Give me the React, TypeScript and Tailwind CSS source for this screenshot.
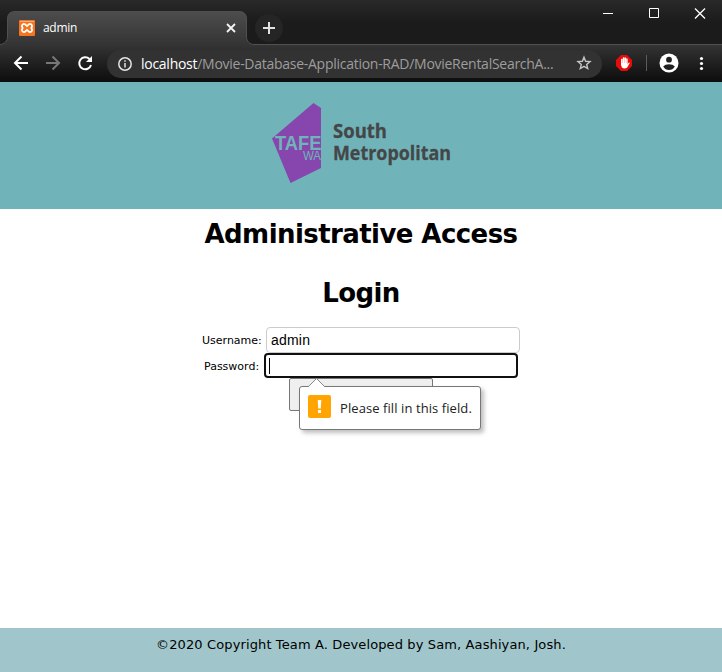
import React from "react";

function BrowserTabs() {
  return (
    <div className="relative flex h-[45px] items-start bg-linear-to-b from-[#292929] via-[#1b1b1b] to-[#1b1b1b] pl-[7px]">
      <svg className="absolute left-0 top-0" width="722" height="45" fill="none">
        <defs>
          <linearGradient id="tab" x1="0" y1="11" x2="0" y2="45" gradientUnits="userSpaceOnUse">
            <stop stopColor="#4d4d4d" />
            <stop offset="1" stopColor="#343434" />
          </linearGradient>
        </defs>
        <path d="M0 44.5C4 44.5 7.500 41 7.500 37V19Q7.500 11.500 15 11.500H239Q246.500 11.500 246.500 19V37C246.500 41 250 44.500 254 44.500H722V45H0Z" fill="url(#tab)" />
        <path d="M0 44.500C4 44.500 7.500 41 7.500 37V19Q7.500 11.500 15 11.500H239Q246.500 11.500 246.500 19V37C246.500 41 250 44.500 254 44.500H722" stroke="#505050" />
      </svg>
      <div className="relative mt-[11px] flex h-[34px] w-[240px] items-center pl-3 pr-[11px]">
        <svg width="16" height="16" viewBox="0 0 16 16" fill="none">
          <rect width="16" height="16" rx="1" fill="#f4741f" />
          <path d="M1 1.500H15" stroke="#f9ad74" />
          <path d="M5.400 4A2.200 2.200 0 0 0 3.500 7.700Q3.900 8 3.500 8.300A2.200 2.200 0 0 0 5.400 12Q6.500 12 7.100 10.700L8 9.900L8.900 10.700Q9.500 12 10.600 12A2.200 2.200 0 0 0 12.500 8.300Q12.100 8 12.500 7.700A2.200 2.200 0 0 0 10.600 4Q9.500 4 8.900 5.300L8 6.100L7.100 5.300Q6.500 4 5.400 4Z" stroke="white" strokeWidth="1.800" />
        </svg>
        <span className="ml-2 font-['Open_Sans',sans-serif] text-[12px] tracking-[-0.3px] text-white">admin</span>
        <svg className="ml-auto" width="10" height="10" stroke="#f4f4f4" strokeWidth="1.800">
          <path d="M1 1L9 9M9 1L1 9" />
        </svg>
      </div>
      <div className="relative ml-2 mt-[14px] flex size-7 items-center justify-center rounded-full bg-[#252525]">
        <svg width="12" height="12" stroke="#e1e1e1" strokeWidth="2"><path d="M6 0V12M0 6H12" /></svg>
      </div>
      <svg className="relative ml-auto mr-3 mt-2" width="108" height="12" fill="none" stroke="white">
        <path d="M1 5.500H11M47.500 .500H56.500V9.500H47.500Z" />
        <path d="M93 .500L103 10.500M103 .500L93 10.500" strokeWidth="1.300" />
      </svg>
    </div>
  );
}

function Toolbar() {
  return (
    <div className="flex h-[37px] items-center bg-linear-to-b from-[#343434] to-[#0d0d0d]">
      <svg width="107" height="37" fill="none" strokeWidth="2">
        <path d="M28 18H15.500M21.500 11.500L15 18L21.500 24.500" stroke="#fff" />
        <path d="M46 18H58.500M52.500 11.500L59 18L52.500 24.500" stroke="#777" />
        <path d="M89.500 14A6 6 0 1 0 91 20" stroke="#fff" />
        <path d="M92 11V17H86Z" fill="#fff" />
      </svg>
      <div className="flex h-7 w-[495px] items-center rounded-full bg-[#323232] pl-[11px] pr-[10px]">
        <svg width="14" height="14" fill="none" stroke="#e5e5e5" strokeWidth="1.500">
          <circle cx="7" cy="7" r="6.200" /><path d="M7 6V10.500M7 3.300V4.800" />
        </svg>
        <span className="-mt-px ml-[9px] whitespace-nowrap font-['Open_Sans',sans-serif] text-[14px] tracking-[-0.27px] text-[#9d9d9d]"><span className="text-white">localhost</span>/Movie-Database-Application-RAD/MovieRentalSearchA...</span>
        <svg className="-mt-px ml-auto" width="16" height="16" fill="none" stroke="#c4c4c4" strokeWidth="1.400">
          <path d="M8 2.200L9.600 6.300L14 6.600L10.700 9.400L11.700 13.600L8 11.300L4.300 13.600L5.300 9.400L2 6.600L6.400 6.300Z" />
        </svg>
      </div>
      <svg width="120" height="37" fill="none">
        <path d="M19 10H25L30 15V21L25 26H19L14 21V15Z" fill="#e80b0b" />
        <path d="M19.800 14.500V20M21.500 13V19M23.200 13V19M24.900 14V19" stroke="white" strokeWidth="1.500" strokeLinecap="round" />
        <path d="M19.100 18H25V19.600L27 17.500Q28 17.300 27.500 18.500L25 22.800Q22 24.500 19.700 22.200Z" fill="white" />
        <path d="M44.500 10V26" stroke="#5c5c5c" />
        <circle cx="67" cy="18" r="9.500" fill="white" />
        <circle cx="67" cy="14.700" r="2.900" fill="#202020" />
        <path d="M61.200 21.500Q63 19.300 67 19.300Q71 19.300 72.800 21.500Q70.800 25 67 25Q63.200 25 61.200 21.500Z" fill="#202020" />
        <g fill="white"><circle cx="99.500" cy="13.500" r="1.600" /><circle cx="99.500" cy="18.500" r="1.600" /><circle cx="99.500" cy="23.500" r="1.600" /></g>
      </svg>
    </div>
  );
}

function Logo() {
  return (
    <svg width="184" height="80" viewBox="0 0 184 80" className="ml-[6px] font-['Liberation_Sans',sans-serif]">
      <path d="M41.500 0L49 5V65L18.500 80L0 35.500Z" fill="#8646ad" />
      <text x="3" y="47" fontSize="20.500" fontWeight="700" fill="#70b4b9" textLength="46.500" lengthAdjust="spacingAndGlyphs">TAFE</text>
      <text x="31" y="57" fontSize="12" fill="#70b4b9" textLength="18" lengthAdjust="spacingAndGlyphs">WA</text>
      <g className="font-['Open_Sans',sans-serif]" fontSize="20" fontWeight="700" fill="#444648" stroke="#444648" strokeWidth="0.300">
        <text x="61" y="35" textLength="54" lengthAdjust="spacingAndGlyphs">South</text>
        <text x="61" y="56.500" textLength="118" lengthAdjust="spacingAndGlyphs">Metropolitan</text>
      </g>
    </svg>
  );
}

function ValidationMessage() {
  return (
    <div className="absolute left-[10px] top-2 flex h-11 w-[182px] items-center rounded-[3px] border border-[#777] bg-white pl-2 shadow-[3px_3px_4px_rgba(0,0,0,0.25)]">
      <svg className="absolute left-[7px] top-[-9px]" width="19" height="10" fill="white"><path d="M1 9L9.500 .500L18 9" stroke="#888" /><path d="M1 9H18V10H1Z" /></svg>
      <svg className="-mt-1" width="23" height="23"><rect width="23" height="23" rx="2" fill="#ffa400" /><path d="M9.700 5H13.300L12.800 13.500H10.200ZM10 15H13V18H10Z" fill="white" /></svg>
      <span className="ml-[9px] mt-px whitespace-nowrap font-['Open_Sans',sans-serif] text-[13px] tracking-[0.08px] text-[#222]">Please fill in this field.</span>
    </div>
  );
}

export default function App() {
  return (
    <div className="flex h-[672px] w-[722px] flex-col overflow-hidden bg-white font-['DejaVu_Sans',sans-serif] text-black">
      <BrowserTabs />
      <Toolbar />
      <header className="flex h-[127px] shrink-0 justify-center bg-[#70b4b9] pt-[21px]"><Logo /></header>
      <main className="flex flex-1 flex-col items-center">
        <h1 className="mt-[9px] h-8 whitespace-nowrap text-[26px] leading-8 font-bold tracking-[-0.57px]">Administrative Access</h1>
        <h2 className="mt-[27px] h-8 text-[26px] leading-8 font-bold tracking-[-0.6px]">Login</h2>
        <form className="mt-[18px] w-[320px]">
          <label className="flex h-[26px] items-center pl-[1px] text-[11px]">
            <span className="w-[64px] whitespace-nowrap pt-[3px]">Username:</span>
            <input className="h-[26px] w-[254px] rounded-[4px] border border-[#ccc] px-1 font-['Liberation_Sans',sans-serif] text-[14px] tracking-[0.2px] outline-none" defaultValue="admin" />
          </label>
          <label className="flex h-[25px] items-center pl-[3px] text-[11px]">
            <span className="w-[60px] whitespace-nowrap pt-[4px]">Password:</span>
            <span className="flex h-[25px] w-[254px] items-center rounded-[4px] border-2 border-[#101010] pl-[3px]"><span className="h-4 w-px bg-black" /></span>
          </label>
          <div className="relative ml-[88px] h-[33px] w-[144px]">
            <button type="button" className="block h-[33px] w-[144px] rounded-[2px] border border-[#767676] bg-[#efefef]" />
            <ValidationMessage />
          </div>
        </form>
      </main>
      <footer className="h-11 bg-[#a0c6cb] pt-2 text-center text-[13px] leading-[18px] tracking-[0.12px]">©2020 Copyright Team A. Developed by Sam, Aashiyan, Josh.</footer>
    </div>
  );
}
